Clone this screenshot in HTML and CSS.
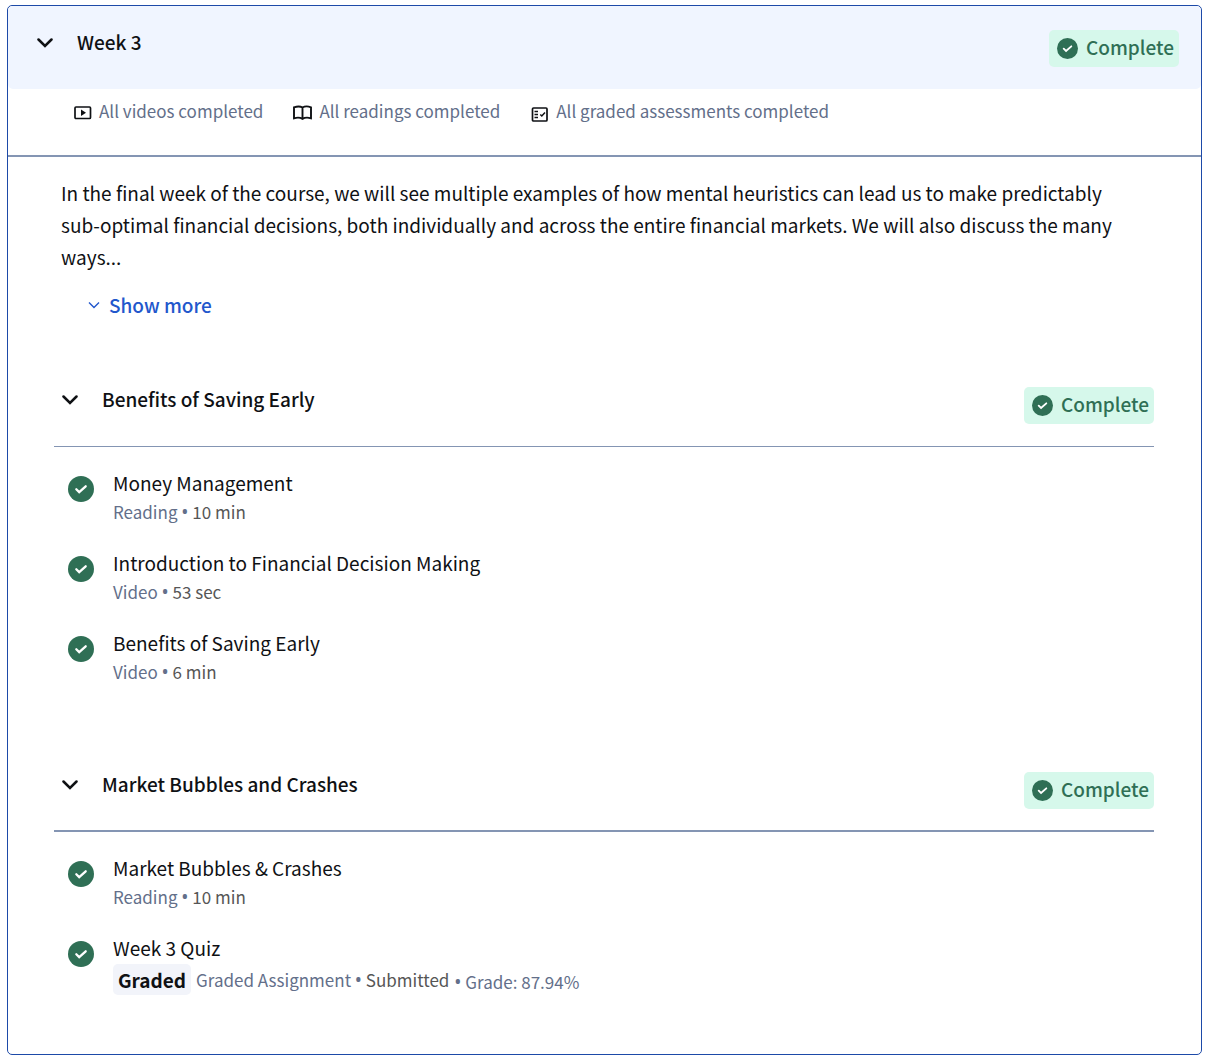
FILE: index.html
```html
<!DOCTYPE html>
<html lang="en">
<head>
<meta charset="utf-8">
<meta name="viewport" content="width=device-width, initial-scale=1">
<title>Week 3</title>
<link rel="stylesheet" href="styles.css">
</head>
<body>
<svg class="symbols" aria-hidden="true">
  <symbol id="chevron" viewBox="0 0 16 10"><path d="M1.500 1.500 8 8l6.500-6.500" fill="none" stroke="currentColor" stroke-width="2.500" stroke-linecap="round"/></symbol>
  <symbol id="check" viewBox="0 0 26 26"><circle cx="13" cy="13" r="13" fill="currentColor"/><path d="m8.300 13.200 2.900 2.900 6.500-5.800" fill="none" stroke="#fff" stroke-width="2.300" stroke-linecap="round"/></symbol>
</svg>
<main class="week">
  <header class="week-header">
    <h2 class="heading"><button class="toggle" type="button" aria-expanded="true"><svg class="chevron"><use href="#chevron"/></svg>Week 3</button></h2>
    <span class="status"><svg class="status-icon"><use href="#check"/></svg>Complete</span>
  </header>
  <ul class="progress">
    <li class="progress-item">
      <svg class="progress-icon" viewBox="0 0 20 20"><rect x="2" y="4" width="15.500" height="11.500" rx="1" fill="none" stroke="currentColor" stroke-width="1.700"/><path d="M8 6.500v6.400l5-3.200z" fill="currentColor"/></svg>
      All videos completed
    </li>
    <li class="progress-item">
      <svg class="progress-icon" viewBox="0 0 20 20"><path d="M9.500 4.500C7.500 3.300 4 3.300 1 4.300v11c3-.9 6-.9 8.500.5 2.500-1.400 5.500-1.400 8.500-.5v-11c-2.500-1-6.500-1-8.500.2zm0 0v11" fill="none" stroke="currentColor" stroke-width="1.900"/></svg>
      All readings completed
    </li>
    <li class="progress-item">
      <svg class="progress-icon" viewBox="0 0 20 20"><rect x="2.500" y="5" width="14.500" height="13" rx="1" fill="none" stroke="currentColor" stroke-width="1.700"/><path d="M4.500 8.500H8M4.500 11.500H8M4.500 14.500H8M10.300 11.500l1.500 1.500 3.200-3.500" fill="none" stroke="currentColor" stroke-width="1.500"/></svg>
      All graded assessments completed
    </li>
  </ul>
  <div class="week-body">
    <p class="summary">In the final week of the course, we will see multiple examples of how mental heuristics can lead us to make predictably sub-optimal financial decisions, both individually and across the entire financial markets. We will also discuss the many ways...</p>
    <button class="show-more" type="button"><svg class="small-chevron" viewBox="0 0 12 8"><path d="m1 1.500 5 5 5-5" fill="none" stroke="currentColor" stroke-width="1.400"/></svg>Show more</button>

    <section class="lesson">
      <header class="lesson-header">
        <h3 class="heading"><button class="toggle" type="button" aria-expanded="true"><svg class="chevron"><use href="#chevron"/></svg>Benefits of Saving Early</button></h3>
        <span class="status"><svg class="status-icon"><use href="#check"/></svg>Complete</span>
      </header>
      <ul class="items">
        <li class="item"><svg class="item-icon"><use href="#check"/></svg>
          <div><a class="item-title" href="#money">Money Management</a>
          <p class="meta">Reading <span class="bullet">•</span> <span class="detail">10 min</span></p></div></li>
        <li class="item"><svg class="item-icon"><use href="#check"/></svg>
          <div><a class="item-title" href="#introduction">Introduction to Financial Decision Making</a>
          <p class="meta">Video <span class="bullet">•</span> <span class="detail">53 sec</span></p></div></li>
        <li class="item"><svg class="item-icon"><use href="#check"/></svg>
          <div><a class="item-title" href="#saving">Benefits of Saving Early</a>
          <p class="meta">Video <span class="bullet">•</span> <span class="detail">6 min</span></p></div></li>
      </ul>
    </section>

    <section class="lesson">
      <header class="lesson-header strong-rule">
        <h3 class="heading"><button class="toggle" type="button" aria-expanded="true"><svg class="chevron"><use href="#chevron"/></svg>Market Bubbles and Crashes</button></h3>
        <span class="status"><svg class="status-icon"><use href="#check"/></svg>Complete</span>
      </header>
      <ul class="items">
        <li class="item"><svg class="item-icon"><use href="#check"/></svg>
          <div><a class="item-title" href="#bubbles">Market Bubbles &amp; Crashes</a>
          <p class="meta">Reading <span class="bullet">•</span> <span class="detail">10 min</span></p></div></li>
        <li class="item"><svg class="item-icon"><use href="#check"/></svg>
          <div><a class="item-title" href="#quiz">Week 3 Quiz</a>
          <div class="meta graded"><span class="tag">Graded</span><span>Graded Assignment <span class="bullet">•</span> <span class="detail">Submitted</span></span><span class="grade"><span class="bullet">•</span> Grade: 87.94%</span></div></div></li>
      </ul>
    </section>
  </div>
</main>
</body>
</html>
```
FILE: styles.css
```css
* { box-sizing: border-box; }

body {
  margin: 0;
  padding: 5px 6px 3px 7px;
  background: #fff;
  color: #0f1114;
  font-family: "Noto Sans CJK SC", "Noto Sans", sans-serif;
  font-size: 19px;
  line-height: 32px;
}

h2, h3, p, ul { margin: 0; padding: 0; font: inherit; }
ul { list-style: none; }
svg { flex: none; display: block; }
.symbols { position: absolute; width: 0; height: 0; }

button {
  display: flex;
  align-items: center;
  padding: 0;
  border: 0;
  background: none;
  color: inherit;
  font: inherit;
  cursor: pointer;
}

.week { border: 1px solid #1d4aa8; border-radius: 5px; }

.week-header {
  display: flex;
  justify-content: space-between;
  align-items: flex-start;
  min-height: 83px;
  padding: 24px 22px 0 29px;
  border-radius: 5px;
  background: #f0f5ff;
}

.heading { margin-top: -4px; }
.toggle { gap: 24px; font-weight: 500; }
.chevron { width: 16px; height: 10px; margin-top: 2px; }

.status {
  display: flex;
  align-items: center;
  gap: 8px;
  height: 37px;
  padding: 0 5px 4px 8px;
  border-radius: 5px;
  background: #d6f8eb;
  color: #2f6f55;
  font-weight: 500;
}
.status-icon { width: 21px; height: 21px; margin-top: 4px; }

.progress {
  display: flex;
  flex-wrap: wrap;
  gap: 0 30px;
  padding: 6px 65px 28px;
  border-bottom: 2px solid #8495b3;
  color: #636f8a;
  font-size: 17px;
}
.progress-item { display: flex; align-items: center; gap: 6px; }
.progress-icon { width: 20px; height: 20px; margin-top: 4px; color: #0f1114; }

.week-body { padding: 20px 47px 59px 46px; }
.summary { padding: 0 20px 0 7px; }

.show-more {
  gap: 9px;
  margin: 16px 0 0 34px;
  color: #2257cc;
  font-weight: 500;
}
.small-chevron { width: 12px; height: 8px; }

.lesson { margin-top: 87px; }
.show-more + .lesson { margin-top: 66px; }

.lesson-header {
  display: flex;
  justify-content: space-between;
  align-items: flex-start;
  min-height: 60px;
  padding-left: 8px;
  border-bottom: 1px solid #8495b3;
}
.strong-rule { border-bottom-width: 2px; }

.items { display: grid; gap: 22px; padding: 20px 14px 0; }
.item { display: flex; gap: 19px; }
.item-icon { width: 26px; height: 26px; margin-top: 9px; color: #2f6f55; }

.item-title { display: block; color: inherit; text-decoration: none; }
.meta { color: #636f8a; font-size: 17px; line-height: 26px; }
.detail { color: #565656; }
.bullet { font-family: "Noto Sans", sans-serif; font-size: 19px; line-height: 1; }

.graded { display: flex; flex-wrap: wrap; align-items: center; gap: 0 5px; }
.grade { padding-top: 4px; }

.tag {
  padding: 0 5px;
  border-radius: 5px;
  background: #f2f4fa;
  color: #0f1114;
  font-size: 19px;
  font-weight: 700;
  line-height: 31px;
}
```
